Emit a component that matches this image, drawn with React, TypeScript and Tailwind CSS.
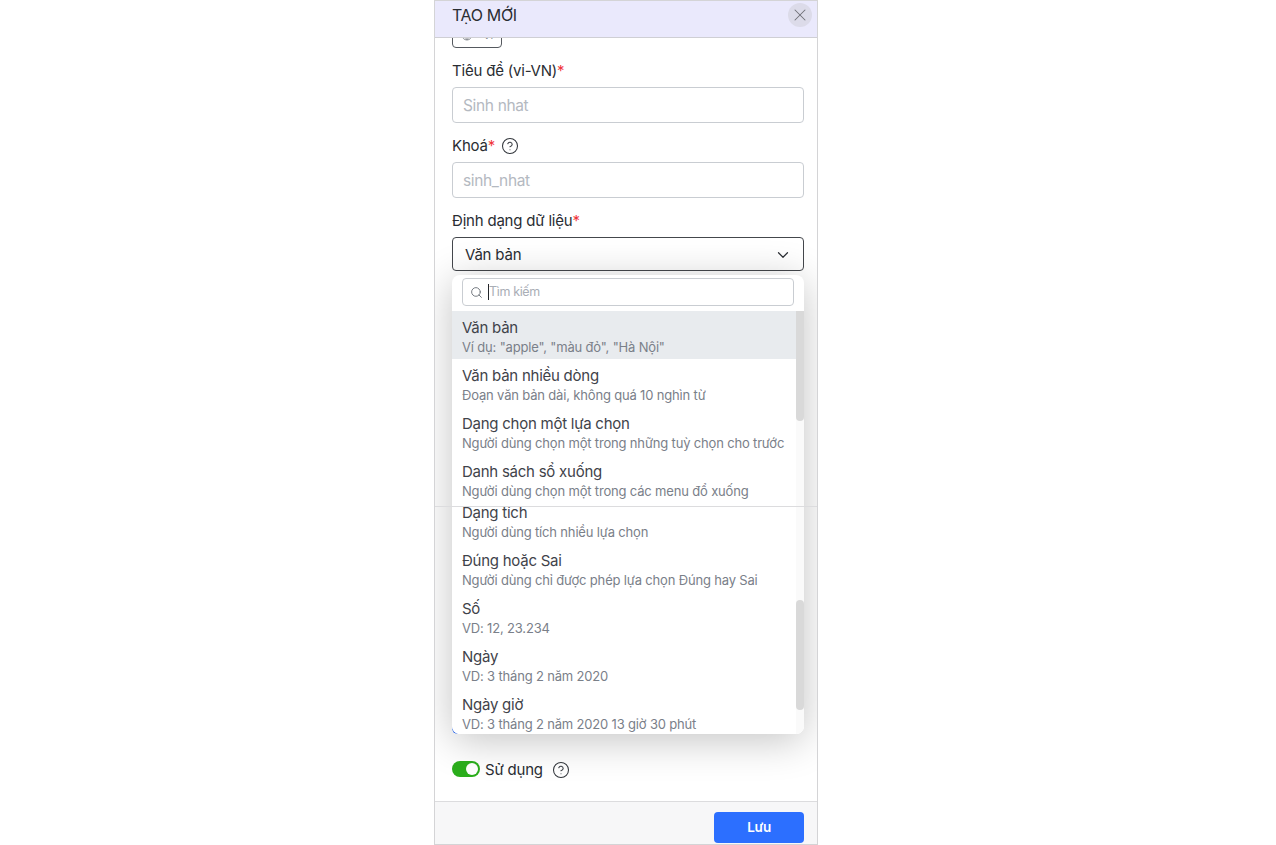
import { ChevronDown, CircleHelp, Globe, Search, X } from "lucide-react";

const options = [
    { title: "Văn bản", hint: 'Ví dụ: "apple", "màu đỏ", "Hà Nội"', active: true },
    { title: "Văn bản nhiều dòng", hint: "Đoạn văn bản dài, không quá 10 nghìn từ" },
    { title: "Dạng chọn một lựa chọn", hint: "Người dùng chọn một trong những tuỳ chọn cho trước" },
    { title: "Danh sách sổ xuống", hint: "Người dùng chọn một trong các menu đổ xuống" },
];

const moreOptions = [
    { title: "Dạng tích", hint: "Người dùng tích nhiều lựa chọn" },
    { title: "Đúng hoặc Sai", hint: "Người dùng chỉ được phép lựa chọn Đúng hay Sai" },
    { title: "Số", hint: "VD: 12, 23.234" },
    { title: "Ngày", hint: "VD: 3 tháng 2 năm 2020" },
    { title: "Ngày giờ", hint: "VD: 3 tháng 2 năm 2020 13 giờ 30 phút" },
];

function Option({ title, hint, active }: { title: string; hint: string; active?: boolean }) {
    return (
        <div className={`h-12 shrink-0 px-2.5 pt-[7px] ${active ? "bg-[#e8ebee]" : "bg-white"}`}>
            <div className="text-[15px] leading-5 tracking-[-0.25px] text-[#3f434a]">{title}</div>
            <div className="-mt-px text-[13px] leading-[20px] tracking-[-0.17px] text-[#7a8089]">{hint}</div>
        </div>
    );
}

function Label({ text }: { text: string }) {
    return (
        <div className="text-[15px] leading-6 tracking-[-0.2px] text-[#2a2d33]">
            {text}
            <span className="text-[#f0353b]">*</span>
        </div>
    );
}

export default function App() {
    return (
        <div className="flex h-[845px] justify-center bg-white pr-6 font-['Inter',sans-serif]">
            <div className="relative flex w-[384px] flex-col overflow-hidden border border-[#d4d4d6]">
                <div className="flex h-[37px] shrink-0 items-start justify-between border-b border-[#cfcfd4] bg-[#eae9fc] pl-[17px] pr-[5px] pt-[2px]">
                    <span className="text-[16px] leading-6 tracking-[-0.35px] text-[#2a2d33]">TẠO MỚI</span>
                    <button className="flex h-6 w-6 items-center justify-center rounded-full bg-[#dcdbe9] text-[#6f7178]">
                        <X size={20} strokeWidth={1.25} />
                    </button>
                </div>

                <div className="relative flex-1 overflow-hidden">
                    <div className="pl-[17px] pr-[13px]">
                        <div className="-mt-[14px] flex h-6 w-[50px] items-end gap-2.5 rounded-b border border-[#55595f] pb-[6px] pl-2 text-[#8a8d93]">
                            <Globe size={12} />
                            <span className="text-[11px] leading-none">Vi</span>
                        </div>
                        <div className="mt-[11px]">
                            <Label text="Tiêu đề (vi-VN)" />
                        </div>
                        <div className="mt-[4px] flex h-9 items-center rounded border border-[#c9cdd2] px-2.5 pt-[2px] text-[15.5px] tracking-[-0.35px] text-[#b4b9c1]">
                            Sinh nhat
                        </div>
                        <div className="mt-[11px] flex items-center gap-[6px]">
                            <Label text="Khoá" />
                            <CircleHelp size={18} strokeWidth={1.4} className="text-[#33373d]" />
                        </div>
                        <div className="mt-[4px] flex h-9 items-center rounded border border-[#c9cdd2] px-2.5 pt-[2px] text-[15.5px] tracking-[-0.35px] text-[#b4b9c1]">
                            sinh_nhat
                        </div>
                        <div className="mt-[11px]">
                            <Label text="Định dạng dữ liệu" />
                        </div>
                        <div className="mt-[4px] flex h-[34px] items-center justify-between rounded border border-[#44474c] pl-3 pr-[11px] pt-[2px] text-[15px] tracking-[-0.2px] text-[#2a2d33]">
                            Văn bản
                            <ChevronDown size={18} strokeWidth={1.6} />
                        </div>
                    </div>

                    <div className="absolute bottom-[19px] left-[17px] flex items-center">
                        <span className="flex h-4 w-7 items-center justify-end rounded-full bg-[#2bae1c] pr-[2px]">
                            <span className="h-3 w-3 rounded-full bg-white" />
                        </span>
                        <span className="ml-[5px] pt-[2px] text-[15px] leading-6 tracking-[-0.2px] text-[#2a2d33]">Sử dụng</span>
                        <CircleHelp size={18} strokeWidth={1.4} className="ml-[9px] mt-[2px] text-[#33373d]" />
                    </div>

                    <div className="absolute left-[17px] top-[680px] h-[16px] w-[6px] rounded-bl-md border-b border-l border-[#2c6fff]" />

                    <div className="absolute left-[17px] top-[237px] w-[352px] overflow-hidden rounded-lg bg-white shadow-[0_6px_40px_rgba(0,0,0,0.24)]">
                        <div className="px-2.5 pb-[5px] pt-[3px]">
                            <div className="flex h-7 items-center rounded border border-[#c9cdd2] pl-[7px] text-[12.5px] tracking-[-0.35px] text-[#a9aeb6]">
                                <Search size={13} strokeWidth={1.75} className="text-[#6f747c]" />
                                <span className="ml-[5px] h-4 w-px bg-[#22252a]" />
                                Tìm kiếm
                            </div>
                        </div>
                        <div className="relative">
                            <div className="h-[195px] overflow-hidden">
                                {options.map((o) => (
                                    <Option key={o.title} {...o} />
                                ))}
                            </div>
                            <div className="h-[228px] overflow-hidden">
                                <div className="-mt-[10px]">
                                    {moreOptions.map((o) => (
                                        <Option key={o.title} {...o} />
                                    ))}
                                </div>
                            </div>
                            <div className="absolute bottom-0 right-0 top-0 w-2 bg-[#fafafa]" />
                            <div className="absolute right-0 top-0 h-[110px] w-2 rounded-b bg-[#d9d9d9]" />
                            <div className="absolute right-0 top-[289px] h-[110px] w-2 rounded bg-[#d9d9d9]" />
                        </div>
                    </div>

                    <div className="absolute left-0 right-0 top-[468px] h-px bg-[#dcdcde]" />
                </div>

                <div className="flex h-[43px] shrink-0 justify-end border-t border-[#dcdcde] bg-[#f7f7f8] pr-[13px] pt-[10px]">
                    <button className="h-[31px] w-[90px] rounded bg-[#2c6fff] text-[13.5px] font-semibold tracking-[-0.3px] text-white">Lưu</button>
                </div>
            </div>
        </div>
    );
}
